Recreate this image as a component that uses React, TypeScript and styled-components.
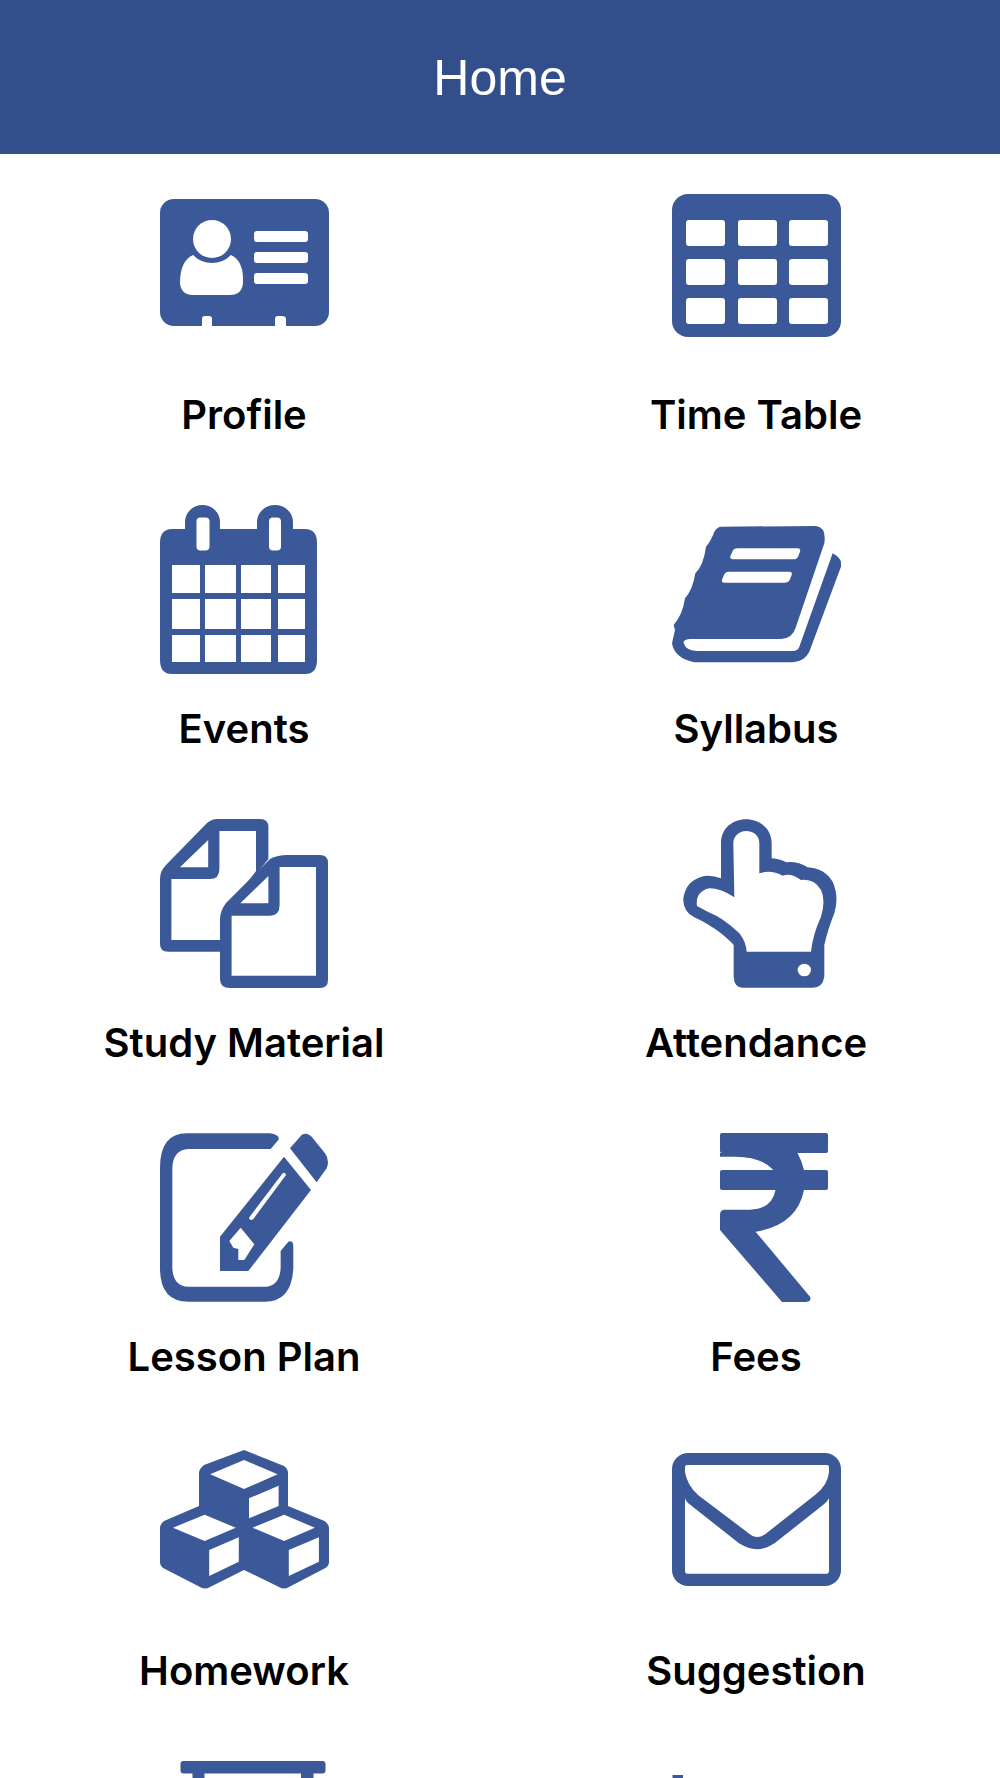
import React from 'react';
import styled, { createGlobalStyle } from 'styled-components';

const BRAND = '#3b5998';

const GlobalStyle = createGlobalStyle`
    html, body {
        margin: 0;
        padding: 0;
        background: #fff;
    }
`;

const Screen = styled.div`
    height: 1778px;
    overflow: hidden;
    background: #fff;
`;

const TopBar = styled.header`
    height: 154px;
    box-sizing: border-box;
    padding-top: 51px;
    background: #324f8b;
    color: #fff;
    text-align: center;
    font-family: 'Liberation Sans', Arial, sans-serif;
    font-size: 50px;
    line-height: 55px;
`;

const MenuGrid = styled.main`
    display: grid;
    grid-template-columns: 1fr 1fr;
    column-gap: 24px;
    row-gap: 65px;
    padding-top: 37px;
`;

const Tile = styled.a`
    display: flex;
    flex-direction: column;
    align-items: center;
    color: #000;
`;

const Glyph = styled.svg`
    display: block;
    width: 169px;
    height: 169px;
    fill: ${BRAND};

    .paper {
        fill: #fff;
    }
`;

const Label = styled.span`
    margin-top: 30px;
    font-family: Inter, 'Noto Sans', sans-serif;
    font-size: 40px;
    font-weight: 600;
    line-height: 50px;
    white-space: nowrap;
`;

const ProfileIcon = () => (
    <Glyph viewBox="0 0 169 169">
        <rect y="8" width="169" height="127" rx="14" />
        <circle className="paper" cx="52" cy="48" r="19" />
        <path className="paper" d="M33 64Q41 72 52 72Q63 72 71 64Q84 70 83 92Q82 104 70 104H33Q21 104 20 92Q20 70 33 64Z" />
        <rect className="paper" x="94" y="40" width="54" height="11" rx="3" />
        <rect className="paper" x="94" y="61" width="54" height="11" rx="3" />
        <rect className="paper" x="94" y="82" width="54" height="11" rx="3" />
        <path className="paper" d="M42 136V128Q42 125 45 125H49Q52 125 52 128V136Z" />
        <path className="paper" d="M115 136V128Q115 125 118 125H122Q126 125 126 128V136Z" />
    </Glyph>
);

const TimeTableIcon = () => (
    <Glyph viewBox="0 0 169 169">
        <rect y="3" width="169" height="143" rx="16" />
        {[29, 68, 107].map((y) =>
            [14, 66, 117].map((x) => <rect key={`${x}-${y}`} className="paper" x={x} y={y} width="39" height="26" rx="3" />),
        )}
    </Glyph>
);

const EventsIcon = () => (
    <Glyph viewBox="0 0 169 169">
        <path d="M25 24V17A17.500 17 0 0 1 60 17V24H97V17A18 17 0 0 1 133 17V24H145Q157 24 157 38V155Q157 169 145 169H12Q0 169 0 155V38Q0 24 12 24Z" />
        <rect className="paper" x="36.500" y="12.500" width="13" height="33" rx="4" />
        <rect className="paper" x="109" y="12.500" width="12" height="33" rx="4" />
        {[
            [60, 28],
            [94, 30],
            [130, 27],
        ].map(([y, h]) =>
            [
                [12, 28],
                [45, 31],
                [81, 30],
                [118, 27],
            ].map(([x, w]) => <rect key={`${x}-${y}`} className="paper" x={x} y={y} width={w} height={h} />),
        )}
    </Glyph>
);

const SyllabusIcon = () => (
    <Glyph viewBox="0 0 169 169">
        <g transform="translate(-11 10) scale(0.3333)">
            <path d="M180 35L465 33Q497 37 490 85L405 335Q395 370 360 372L85 372Q65 375 68 385Q75 408 110 408L395 408Q410 408 415 395L515 115Q545 130 540 155L445 410Q430 440 395 442L100 442Q40 430 33 385L42 345L38 330Q65 300 72 250L78 262L72 250Q95 225 103 175L107 185L103 175Q128 150 135 95L140 100L135 95Q150 78 160 50Q170 35 180 35Z" />
            <path className="paper" d="M230 100H410Q420 100 417 110L412 123Q408 133 398 133H215Q206 133 208 124L214 110Q218 100 230 100Z" />
            <path className="paper" d="M205 170H385Q395 170 392 180L387 193Q383 203 373 203H190Q181 203 183 194L189 180Q193 170 205 170Z" />
        </g>
    </Glyph>
);

const StudyMaterialIcon = () => (
    <Glyph viewBox="0 0 169 169">
        <path d="M57 0H100Q108.400 0 108.400 8V40L60 100V132.700H8Q0 132.700 0 125V60Q0 52 6 46L47 4Q52 0 57 0Z" />
        <path className="paper" d="M59.400 12H96V52L60 100V121H11.400V60H50Q59.400 60 59.400 50Z" />
        <path className="paper" d="M48.200 21V48.300H20Z" />
        <path d="M128 36H160Q168 36 168 44V161Q168 169 160 169H70Q60 169 60 160V100Q60 92 66 84L110 40Q117 36 128 36Z" />
        <path className="paper" d="M119.600 48H156V156.700H71.600V96.700H110Q119.600 96.700 119.600 86Z" />
        <path className="paper" d="M108.400 57V84.300H80.300Z" />
    </Glyph>
);

const AttendanceIcon = () => (
    <Glyph viewBox="0 0 169 169">
        <g transform="translate(-1 -9) scale(0.3333)">
            <path d="M150 205V100C150 55 185 28 225 28C265 28 302 55 302 100V145Q330 148 345 157Q380 153 410 172Q460 175 485 215Q505 260 490 310Q470 360 460 405V500Q455 533 425 533H215Q190 533 188 500V405Q180 395 150 370Q110 340 70 322Q35 305 37 265Q45 210 100 198Q125 195 150 205Z" />
            <path className="paper" d="M187 100C187 78 205 63 225 63C250 63 265 78 265 100V190Q300 178 335 197Q360 188 390 210Q430 205 450 240Q465 270 450 320Q425 375 420 425H227Q225 395 205 370Q160 325 110 305L78 288Q72 245 115 235Q150 235 190 262Z" />
            <ellipse className="paper" cx="400" cy="480" rx="20" ry="19" />
        </g>
    </Glyph>
);

const LessonPlanIcon = () => (
    <Glyph viewBox="0 0 169 169">
        <g transform="translate(-10 -8) scale(0.3333)">
            <path d="M110 25H360Q392 30 385 45L362 72H115Q68 75 67 130V430Q70 485 115 485H345Q388 485 392 430V378L415 350Q430 345 430 365V430Q425 530 345 530H115Q30 530 30 430V130Q30 25 110 25Z" />
            <path d="M420 70L455 30Q470 20 485 35L525 85Q540 105 530 130L500 172Z" />
            <path d="M402 95L483 195L295 438H210V335Z" />
            <path className="paper" d="M398 145Q405 140 408 150L310 282Q300 290 297 278Z" />
            <path className="paper" d="M272 308L313 358L283 405H265V372L250 368L238 348Z" />
        </g>
    </Glyph>
);

const FeesIcon = () => (
    <Glyph viewBox="0 0 169 169">
        <rect x="48" width="108" height="20" rx="2" />
        <rect x="48" y="37" width="108" height="20" rx="2" />
        <path d="M48 20V23.700H63Q90 24 101.400 37H132Q130 28 125.400 20Z" />
        <path d="M103.500 57Q100 76 78 76.700H52Q48 77 48 82V97L110 169H134Q140 168 138 163.700L83.600 98.700Q125 92 132 57Z" />
    </Glyph>
);

const HomeworkIcon = () => (
    <Glyph viewBox="0 0 169 169">
        <path d="M84 3L124 19Q128 22 128 26V59L164.500 74Q169 77 169 81V115Q169 119 164.500 121.500L129 140Q124 143 119 140L84 123L50 140Q45 143 40 140L4 121.500Q0 119 0 115V81Q0 77 4 74L39 59V26Q39 22 44 18L84 3Z" />
        <path className="paper" d="M84 13L117.600 27.300L84 42L50.200 27.300Z" />
        <path className="paper" d="M118.600 38.700V59L89 71.300V51.300Z" />
        <path className="paper" d="M44.600 67.700L75.700 80.700L44.600 94L13 80.700Z" />
        <path className="paper" d="M78.800 90.300V114.700L49.200 129V103Z" />
        <path className="paper" d="M124.200 67.700L154.800 80.700L124.200 94L92.600 80.700Z" />
        <path className="paper" d="M158.900 90.300V114.700L128.800 129V103Z" />
    </Glyph>
);

const SuggestionIcon = () => (
    <Glyph viewBox="0 0 169 169">
        <rect y="6" width="169" height="133" rx="16" />
        <path className="paper" d="M15 18H155Q157 18 157 20V25Q156 38 143 48L96 85Q85.600 95 75 85L26 48Q15 38 13 25V20Q13 18 15 18Z" />
        <path className="paper" d="M13 51.300Q14 54 16 56L67 96.300Q85.600 108 102.500 96.300L151 58Q155 55 157 51.300V124Q157 126.700 155 126.700H15Q13 126.700 13 124Z" />
    </Glyph>
);

// The last row only starts at the bottom edge of the screen
const CutOffLeftIcon = () => (
    <Glyph viewBox="0 0 169 169">
        <rect x="20.500" width="145" height="12.500" rx="3" />
        <rect x="32.500" y="10" width="12" height="30" />
        <rect x="141" y="10" width="12.500" height="30" />
    </Glyph>
);

const CutOffRightIcon = () => (
    <Glyph viewBox="0 0 169 169">
        <rect x="0.500" y="14" width="10.500" height="30" />
    </Glyph>
);

const TILES: { label?: string; Icon: () => React.JSX.Element }[] = [
    { label: 'Profile', Icon: ProfileIcon },
    { label: 'Time Table', Icon: TimeTableIcon },
    { label: 'Events', Icon: EventsIcon },
    { label: 'Syllabus', Icon: SyllabusIcon },
    { label: 'Study Material', Icon: StudyMaterialIcon },
    { label: 'Attendance', Icon: AttendanceIcon },
    { label: 'Lesson Plan', Icon: LessonPlanIcon },
    { label: 'Fees', Icon: FeesIcon },
    { label: 'Homework', Icon: HomeworkIcon },
    { label: 'Suggestion', Icon: SuggestionIcon },
    { Icon: CutOffLeftIcon },
    { Icon: CutOffRightIcon },
];

export default function App() {
    return (
        <Screen>
            <GlobalStyle />
            <TopBar>Home</TopBar>
            <MenuGrid>
                {TILES.map(({ label, Icon }, idx) => (
                    <Tile key={idx}>
                        <Icon />
                        {label && <Label>{label}</Label>}
                    </Tile>
                ))}
            </MenuGrid>
        </Screen>
    );
}
